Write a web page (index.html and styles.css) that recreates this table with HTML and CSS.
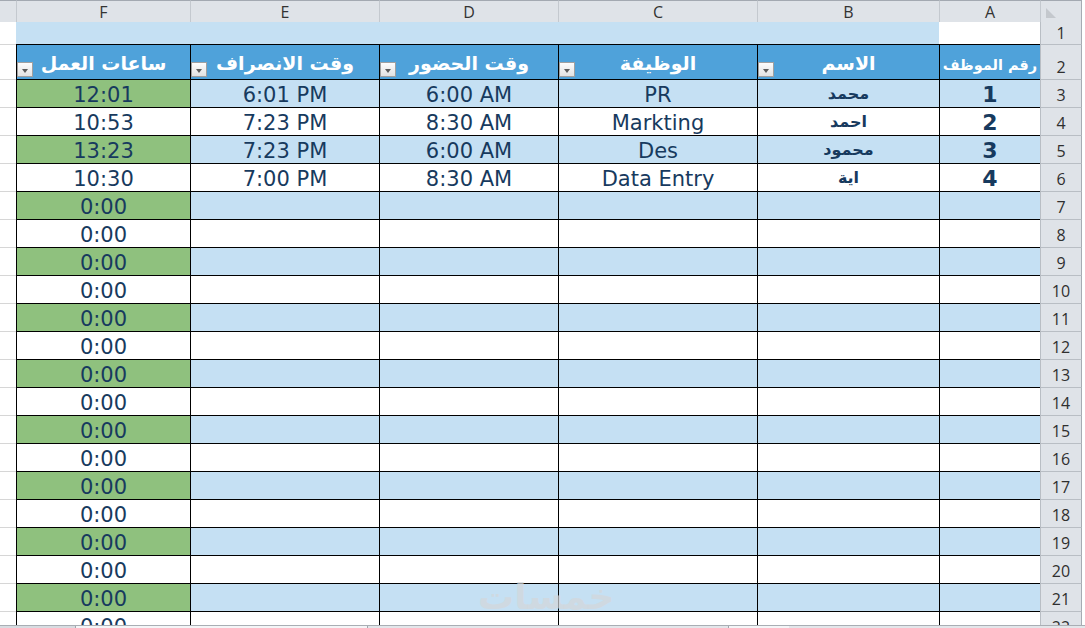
FILE: index.html
```html
<!DOCTYPE html>
<html lang="ar">
<head>
<meta charset="utf-8">
<title>جدول الحضور والانصراف</title>
<link rel="stylesheet" href="styles.css">
</head>
<body>
<div class="sheet">
  <div class="row colhdr">
    <div class="ch first"></div>
    <div class="ch">F</div>
    <div class="ch">E</div>
    <div class="ch">D</div>
    <div class="ch">C</div>
    <div class="ch">B</div>
    <div class="ch">A</div>
    <div class="ch corner"><span class="selall"></span></div>
    <div class="edge"></div>
  </div>
  <div class="row r1">
    <div class="g top"></div>
    <div class="title"></div>
    <div class="blank"></div>
    <div class="rh notop">1</div>
    <div class="edge"></div>
  </div>
  <div class="row r2">
    <div class="g"></div>
    <div class="c th">ساعات العمل<span class="dd"></span></div>
    <div class="c th">وقت الانصراف<span class="dd"></span></div>
    <div class="c th">وقت الحضور<span class="dd"></span></div>
    <div class="c th">الوظيفة<span class="dd"></span></div>
    <div class="c th">الاسم<span class="dd"></span></div>
    <div class="c th small">رقم الموظف</div>
    <div class="rh">2</div>
    <div class="edge"></div>
  </div>
  <div class="row rd odd"><div class="g"></div><div class="c hrs">12:01</div><div class="c">6:01 PM</div><div class="c">6:00 AM</div><div class="c">PR</div><div class="c name">محمد</div><div class="c num">1</div><div class="rh">3</div><div class="edge"></div></div>
  <div class="row rd"><div class="g"></div><div class="c hrs">10:53</div><div class="c">7:23 PM</div><div class="c">8:30 AM</div><div class="c">Markting</div><div class="c name">احمد</div><div class="c num">2</div><div class="rh">4</div><div class="edge"></div></div>
  <div class="row rd odd"><div class="g"></div><div class="c hrs">13:23</div><div class="c">7:23 PM</div><div class="c">6:00 AM</div><div class="c">Des</div><div class="c name">محمود</div><div class="c num">3</div><div class="rh">5</div><div class="edge"></div></div>
  <div class="row rd"><div class="g"></div><div class="c hrs">10:30</div><div class="c">7:00 PM</div><div class="c">8:30 AM</div><div class="c">Data Entry</div><div class="c name">اية</div><div class="c num">4</div><div class="rh">6</div><div class="edge"></div></div>
  <div class="row rd odd"><div class="g"></div><div class="c hrs">0:00</div><div class="c"></div><div class="c"></div><div class="c"></div><div class="c"></div><div class="c"></div><div class="rh">7</div><div class="edge"></div></div>
  <div class="row rd"><div class="g"></div><div class="c hrs">0:00</div><div class="c"></div><div class="c"></div><div class="c"></div><div class="c"></div><div class="c"></div><div class="rh">8</div><div class="edge"></div></div>
  <div class="row rd odd"><div class="g"></div><div class="c hrs">0:00</div><div class="c"></div><div class="c"></div><div class="c"></div><div class="c"></div><div class="c"></div><div class="rh">9</div><div class="edge"></div></div>
  <div class="row rd"><div class="g"></div><div class="c hrs">0:00</div><div class="c"></div><div class="c"></div><div class="c"></div><div class="c"></div><div class="c"></div><div class="rh">10</div><div class="edge"></div></div>
  <div class="row rd odd"><div class="g"></div><div class="c hrs">0:00</div><div class="c"></div><div class="c"></div><div class="c"></div><div class="c"></div><div class="c"></div><div class="rh">11</div><div class="edge"></div></div>
  <div class="row rd"><div class="g"></div><div class="c hrs">0:00</div><div class="c"></div><div class="c"></div><div class="c"></div><div class="c"></div><div class="c"></div><div class="rh">12</div><div class="edge"></div></div>
  <div class="row rd odd"><div class="g"></div><div class="c hrs">0:00</div><div class="c"></div><div class="c"></div><div class="c"></div><div class="c"></div><div class="c"></div><div class="rh">13</div><div class="edge"></div></div>
  <div class="row rd"><div class="g"></div><div class="c hrs">0:00</div><div class="c"></div><div class="c"></div><div class="c"></div><div class="c"></div><div class="c"></div><div class="rh">14</div><div class="edge"></div></div>
  <div class="row rd odd"><div class="g"></div><div class="c hrs">0:00</div><div class="c"></div><div class="c"></div><div class="c"></div><div class="c"></div><div class="c"></div><div class="rh">15</div><div class="edge"></div></div>
  <div class="row rd"><div class="g"></div><div class="c hrs">0:00</div><div class="c"></div><div class="c"></div><div class="c"></div><div class="c"></div><div class="c"></div><div class="rh">16</div><div class="edge"></div></div>
  <div class="row rd odd"><div class="g"></div><div class="c hrs">0:00</div><div class="c"></div><div class="c"></div><div class="c"></div><div class="c"></div><div class="c"></div><div class="rh">17</div><div class="edge"></div></div>
  <div class="row rd"><div class="g"></div><div class="c hrs">0:00</div><div class="c"></div><div class="c"></div><div class="c"></div><div class="c"></div><div class="c"></div><div class="rh">18</div><div class="edge"></div></div>
  <div class="row rd odd"><div class="g"></div><div class="c hrs">0:00</div><div class="c"></div><div class="c"></div><div class="c"></div><div class="c"></div><div class="c"></div><div class="rh">19</div><div class="edge"></div></div>
  <div class="row rd"><div class="g"></div><div class="c hrs">0:00</div><div class="c"></div><div class="c"></div><div class="c"></div><div class="c"></div><div class="c"></div><div class="rh">20</div><div class="edge"></div></div>
  <div class="row rd odd"><div class="g"></div><div class="c hrs">0:00</div><div class="c"></div><div class="c"></div><div class="c"></div><div class="c"></div><div class="c"></div><div class="rh">21</div><div class="edge"></div></div>
  <div class="row rd"><div class="g"></div><div class="c hrs">0:00</div><div class="c"></div><div class="c"></div><div class="c"></div><div class="c"></div><div class="c"></div><div class="rh">22</div><div class="edge"></div></div>
  <div class="watermark">خمسات</div>
</div>
<div class="tabs">
  <div class="seg s1"></div>
  <div class="seg s2"></div>
  <div class="seg s3"></div>
  <div class="seg s4"></div>
  <div class="seg s5"></div>
</div>
</body>
</html>
```

FILE: styles.css
```css
html, body {
  margin: 0;
  padding: 0;
}

body {
  width: 1085px;
  height: 628px;
  overflow: hidden;
  background: #ffffff;
  font-family: "DejaVu Sans", sans-serif;
}

.sheet {
  position: relative;
  height: 625px;
  overflow: hidden;
  display: flex;
  flex-direction: column;
}

.row {
  flex: none;
  display: grid;
  grid-template-columns: 16px 174px 189px 179px 199px 182px 101px 42px 3px;
}

.colhdr { height: 22px; }
.r1 { height: 22px; }
.r2 { height: 35px; }
.rd { height: 28px; }

/* column headers */
.ch {
  box-sizing: border-box;
  background: #dfe3e8;
  border-top: 1px solid #a3a9b1;
  border-left: 1px solid #c4c9cf;
  border-bottom: 1px solid #b0b6bd;
  font-family: "Open Sans", sans-serif;
  font-size: 16px;
  color: #333;
  text-align: center;
  line-height: 20px;
  padding-top: 1px;
}

.ch.first { border-left: none; }

.ch.corner {
  display: flex;
  align-items: flex-start;
  padding: 7px 0 0 5px;
  border-right: 1px solid #a6abb2;
}

.selall {
  width: 0;
  height: 0;
  border-bottom: 10px solid #c4c8cd;
  border-right: 10px solid transparent;
}

.edge {
  background: #ffffff;
}

/* gutter (partially visible column) */
.g {
  box-sizing: border-box;
  background: #fff;
  border-top: 1px solid #d6d6d6;
}
.g.top { border-top: none; }

/* row 1 */
.title {
  grid-column: span 5;
  background: #c5e0f3;
}
.blank { background: #fff; }

/* row headers */
.rh {
  box-sizing: border-box;
  background: #dfe3e8;
  border-top: 1px solid #b9bec4;
  border-left: 1px solid #b9bec4;
  border-right: 1px solid #a6abb2;
  font-family: "Open Sans", sans-serif;
  font-size: 16px;
  color: #2f2f2f;
  display: flex;
  align-items: flex-end;
  justify-content: center;
  padding-bottom: 1px;
}
.rh.notop { border-top: none; }

/* data cells */
.c {
  position: relative;
  box-sizing: border-box;
  border-top: 1px solid #000;
  border-left: 1px solid #000;
  background: #ffffff;
  display: flex;
  align-items: flex-end;
  justify-content: center;
  font-size: 21px;
  color: #173a5e;
  white-space: nowrap;
}

.odd .c { background: #c5e0f3; }
.odd .c.hrs { background: #8fc17e; }

.c.name {
  font-size: 16px;
  font-weight: bold;
  padding-bottom: 4px;
}

.c.num {
  font-size: 22px;
  font-weight: bold;
}

/* table header row */
.c.th {
  background: #4fa2da;
  color: #ffffff;
  font-size: 19px;
  font-weight: bold;
  padding-bottom: 5px;
}

.c.th.small { font-size: 14.5px; padding-bottom: 6px; }

.dd {
  position: absolute;
  left: 0;
  bottom: 2px;
  width: 16px;
  height: 15px;
  box-sizing: border-box;
  border: 1px solid #a0a0a0;
  background: linear-gradient(#fdfdfd, #e2e2e2);
}

.dd::after {
  content: "";
  position: absolute;
  left: 4px;
  top: 6px;
  border-left: 3.5px solid transparent;
  border-right: 3.5px solid transparent;
  border-top: 4px solid #5c5c5c;
}

.watermark {
  position: absolute;
  left: 478px;
  top: 576px;
  font-size: 36px;
  font-weight: bold;
  color: rgba(212, 215, 218, 0.7);
}

/* bottom sheet-tab / scrollbar strip */
.tabs {
  display: flex;
  height: 3px;
  box-sizing: border-box;
  border-top: 1px solid #a9aeb4;
  background: #e3e6ea;
}
.seg { height: 2px; }
.s1 { width: 75px; background: #d8dce1; }
.s2 { width: 291px; background: #f4f5f7; border-left: 1px solid #a0a5ab; border-right: 1px solid #a0a5ab; }
.s3 { width: 360px; background: #e3e6ea; }
.s4 { width: 60px; background: #f4f5f7; border-left: 1px solid #a0a5ab; }
.s5 { flex: 1; background: #e3e6ea; }
```
